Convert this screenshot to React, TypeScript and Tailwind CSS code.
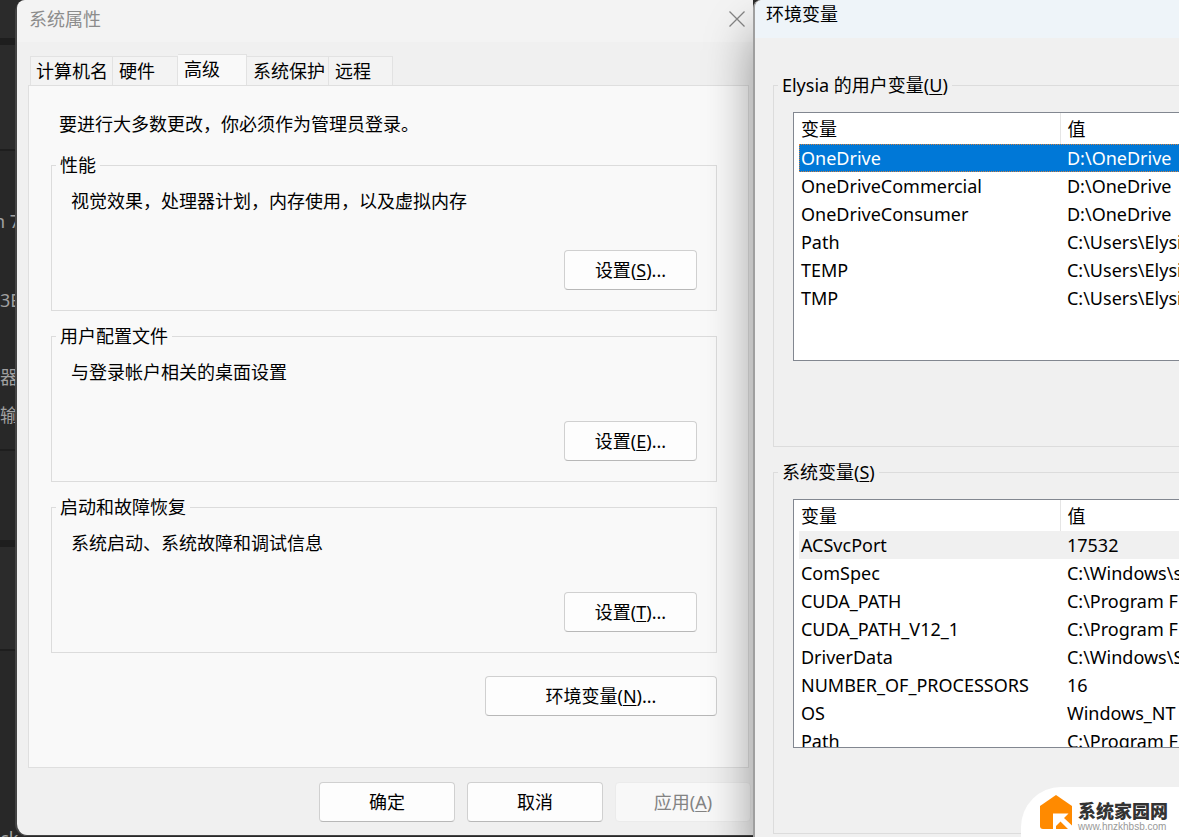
import type { ReactNode } from "react";

// ── Data ──────────────────────────────────────────────────────────────────────

interface Variable {
  name: string;
  value: string;
}

const USER_VARS: Variable[] = [
  { name: "OneDrive", value: "D:\\OneDrive" },
  { name: "OneDriveCommercial", value: "D:\\OneDrive" },
  { name: "OneDriveConsumer", value: "D:\\OneDrive" },
  { name: "Path", value: "C:\\Users\\Elysi" },
  { name: "TEMP", value: "C:\\Users\\Elysi" },
  { name: "TMP", value: "C:\\Users\\Elysi" },
];

const SYSTEM_VARS: Variable[] = [
  { name: "ACSvcPort", value: "17532" },
  { name: "ComSpec", value: "C:\\Windows\\s" },
  { name: "CUDA_PATH", value: "C:\\Program F" },
  { name: "CUDA_PATH_V12_1", value: "C:\\Program F" },
  { name: "DriverData", value: "C:\\Windows\\S" },
  { name: "NUMBER_OF_PROCESSORS", value: "16" },
  { name: "OS", value: "Windows_NT" },
  { name: "Path", value: "C:\\Program F" },
];

const TABS = [
  { label: "计算机名", width: "w-[83px]" },
  { label: "硬件", width: "w-[65px]" },
  { label: "高级", width: "w-[69px]" },
  { label: "系统保护", width: "w-[82px]" },
  { label: "远程", width: "w-[64px]" },
];

const SECTIONS = [
  { title: "性能", text: "视觉效果，处理器计划，内存使用，以及虚拟内存", hotkey: "S" },
  { title: "用户配置文件", text: "与登录帐户相关的桌面设置", hotkey: "E" },
  { title: "启动和故障恢复", text: "系统启动、系统故障和调试信息", hotkey: "T" },
];

// ── Pieces ────────────────────────────────────────────────────────────────────

function PushButton({ children, className, disabled }: { children: ReactNode; className: string; disabled?: boolean }) {
  return (
    <button
      type="button"
      disabled={disabled}
      className={`h-10 rounded border border-[#d0d0d0] border-b-[#b8b8b8] bg-[#fdfdfd] disabled:border-[#ebebeb] disabled:bg-[#f8f8f8] disabled:text-[#838383] ${className}`}
    >
      {children}
    </button>
  );
}

function Hotkey({ children }: { children: string }) {
  return (
    <>
      (<span className="underline decoration-1 underline-offset-2">{children}</span>)
    </>
  );
}

function VariableGroup({ title, hotkey, rows, activeRow }: {
  title: string;
  hotkey: string;
  rows: Variable[];
  activeRow: string;
}) {
  return (
    <fieldset className="border border-[#dcdcdc] px-[19px] pb-[85px]">
      <legend className="-ml-[15px] px-1 leading-6">
        {title}
        <Hotkey>{hotkey}</Hotkey>
      </legend>
      <div className="mt-[15px] h-[249px] overflow-hidden border border-[#828790] bg-white pl-[5px]">
        <table className="w-full table-fixed border-collapse text-left">
          <thead>
            <tr className="h-[31px]">
              <th className="w-[262px] border-r border-[#e5e5e5] pl-0.5 font-normal">变量</th>
              <th className="pl-1.5 font-normal">值</th>
            </tr>
          </thead>
          <tbody>
            {rows.map((row, i) => (
              <tr key={row.name} className={`h-7 leading-7 whitespace-nowrap ${i === 0 ? activeRow : ""}`}>
                <td className="pl-0.5">{row.name}</td>
                <td className="pl-1.5">{row.value}</td>
              </tr>
            ))}
          </tbody>
        </table>
      </div>
    </fieldset>
  );
}

// Settings page left visible behind the dialogs
function Backdrop() {
  return (
    <div className="absolute inset-0 flex flex-col overflow-hidden bg-[#1e1e1e] text-lg leading-7 text-[#a0a0a0]">
      <div className="h-[38px] shrink-0 bg-[#2b2b2b]" />
      <div className="mt-[7px] h-[104px] shrink-0 bg-[#2b2b2b]" />
      <div className="mt-0.5 h-[298px] shrink-0 bg-[#282828] pt-14">
        <div className="flex w-5 justify-end whitespace-nowrap">n 7</div>
        <div className="mt-[51px]">3E</div>
        <div className="mt-[49px]">器</div>
        <div className="mt-2.5">输</div>
      </div>
      <div className="mt-0.5 h-[89px] shrink-0 bg-[#282828]" />
      <div className="mt-[7px] h-[102px] shrink-0 bg-[#2b2b2b]" />
      <div className="mt-0.5 grow bg-[#282828] pt-[173px]">ck</div>
    </div>
  );
}

function SystemProperties() {
  return (
    <section className="flex h-[836px] w-[63.4%] shrink-0 flex-col rounded-l-xl border-b border-l-2 border-[#444] bg-[#f0f0f0]">
      <header className="flex h-[42px] items-center justify-between rounded-tl-lg bg-[#f3f3f3] pr-2 pb-1 pl-3 text-[#8c8c8c]">
        <h1>系统属性</h1>
        <button type="button" aria-label="关闭">
          <svg width="16" height="16" viewBox="0 0 16 16" stroke="#858585" strokeWidth="1.3">
            <path d="M.5.5l15 15M15.5.5l-15 15" />
          </svg>
        </button>
      </header>

      <div role="tablist" className="mt-3 ml-[13px] flex h-[31px] items-end">
        {TABS.map(tab => (
          <button
            key={tab.label}
            type="button"
            role="tab"
            aria-selected={tab.label === "高级"}
            className={`h-[29px] border-t border-r border-[#e2e2e2] bg-[#f3f3f3] pl-1.5 text-left whitespace-nowrap first:border-l first:pl-[5px] aria-selected:h-[31px] aria-selected:bg-[#f9f9f9] aria-selected:pb-1 ${tab.width}`}
          >
            {tab.label}
          </button>
        ))}
      </div>

      <div className="mr-1 ml-[11px] h-[683px] border border-[#dfdfdf] bg-[#f9f9f9] pr-[31px] pl-[22px]">
        <p className="mt-[26px] mb-[17px] ml-2 leading-6">要进行大多数更改，你必须作为管理员登录。</p>
        <div className="flex flex-col gap-[13px]">
          {SECTIONS.map(section => (
            <fieldset key={section.title} className="flex flex-col border border-[#dcdcdc] px-[19px] pb-5">
              <legend className="-ml-[15px] px-1 leading-6">{section.title}</legend>
              <p className="mt-3 leading-6">{section.text}</p>
              <PushButton className="mt-[37px] w-[133px] self-end">
                设置<Hotkey>{section.hotkey}</Hotkey>...
              </PushButton>
            </fieldset>
          ))}
        </div>
        <div className="mt-[23px] flex justify-end">
          <PushButton className="w-[232px]">
            环境变量<Hotkey>N</Hotkey>...
          </PushButton>
        </div>
      </div>

      <footer className="mt-3.5 mr-0.5 flex justify-end gap-3">
        <PushButton className="w-[136px]">确定</PushButton>
        <PushButton className="w-[136px]">取消</PushButton>
        <PushButton className="w-[136px]" disabled>
          应用<Hotkey>A</Hotkey>
        </PushButton>
      </footer>
    </section>
  );
}

function EnvironmentVariables() {
  return (
    <section className="relative -mr-8 min-w-0 flex-1 rounded-tl-lg border-l-2 border-[#9f9f9f] bg-[#f0f0f0] shadow-[0_32px_48px_rgba(0,0,0,0.4)]">
      <header className="h-[38px] rounded-tl-lg bg-[#eef4f9] pt-0.5 pl-[11px] leading-6">
        <h2>环境变量</h2>
      </header>
      <div className="mt-[35px] ml-[18px] flex flex-col gap-[13px]">
        <VariableGroup
          title="Elysia 的用户变量"
          hotkey="U"
          rows={USER_VARS}
          activeRow="bg-[#0078d7] text-white outline-1 -outline-offset-1 outline-dotted outline-[#d08040]"
        />
        <VariableGroup title="系统变量" hotkey="S" rows={SYSTEM_VARS} activeRow="bg-[#f0f0f0]" />
      </div>
    </section>
  );
}

function SiteBadge() {
  return (
    <div className="absolute right-0 bottom-0 flex h-[50px] w-[158px] items-center gap-1.5 rounded-tl-[40px] bg-white pl-[19px]">
      <svg width="32" height="34" viewBox="0 0 32 34" className="shrink-0">
        <path d="M16 0L32 11V31Q32 34 29 34H3Q0 34 0 31V11Z" fill="#ff8a00" />
        <path d="M13 18.500H28.500L24 23L32 30.500V34H28L20.500 26.500L16 31V34H13Z" fill="#fff" />
      </svg>
      <div className="pt-2.5 whitespace-nowrap">
        <div className="text-lg leading-5 font-black text-[#333]">系统家园网</div>
        <div className="font-['Liberation_Sans'] text-[10px] leading-3 text-[#999]">www.hnzkhbsb.com</div>
      </div>
    </div>
  );
}

export default function App() {
  return (
    <main className="relative h-screen overflow-hidden font-['Noto_Sans','Noto_Sans_CJK_SC',sans-serif] text-lg text-black">
      <Backdrop />
      <div className="relative flex h-full pl-[15px]">
        <SystemProperties />
        <EnvironmentVariables />
      </div>
      <SiteBadge />
    </main>
  );
}
